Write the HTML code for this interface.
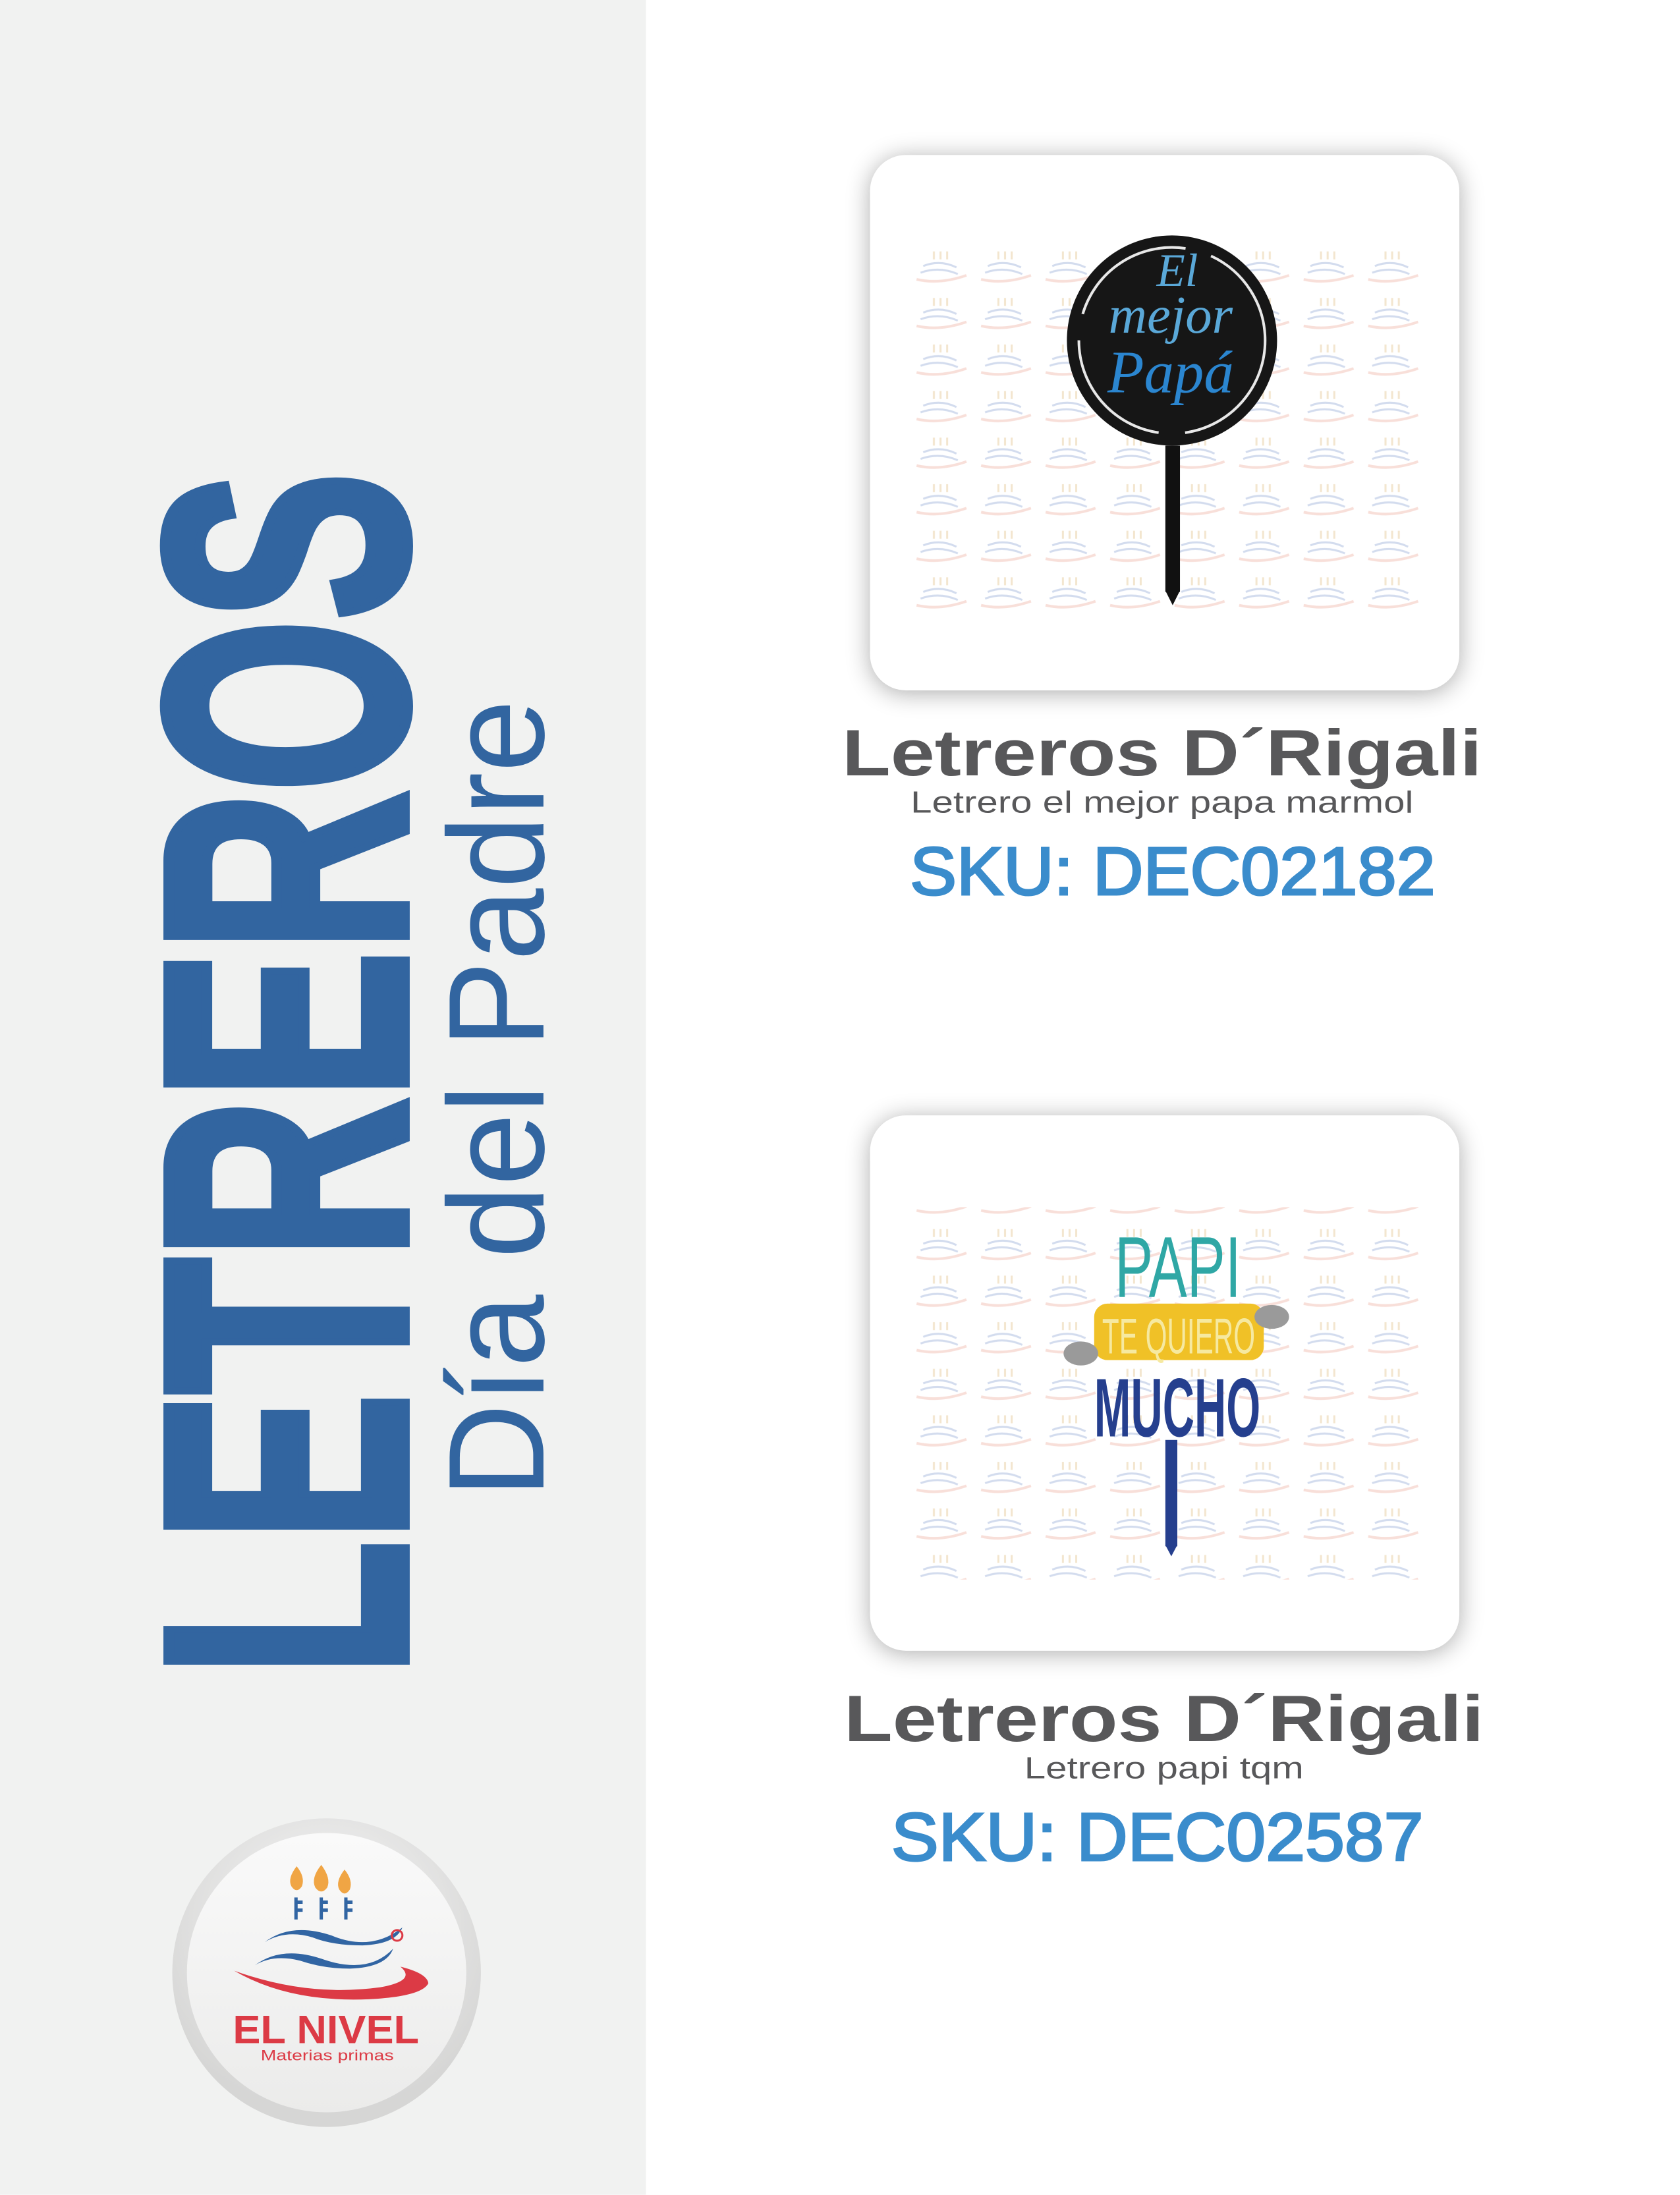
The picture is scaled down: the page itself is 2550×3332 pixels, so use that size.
<!DOCTYPE html>
<html><head><meta charset="utf-8"><style>
html,body{margin:0;padding:0}
body{width:2550px;height:3300px;position:relative;background:#fff;overflow:hidden;font-family:"Liberation Sans",sans-serif}
#w{position:absolute;left:0;top:0;width:2550px;height:3300px;transform:scale(1.0096);transform-origin:0 0}
.left{position:absolute;left:0;top:0;width:971px;height:3300px;background:#f1f2f1}
.card{position:absolute;left:1308px;width:886px;height:805px;border-radius:54px;background:#fff;box-shadow:0 4px 36px rgba(0,0,0,0.32)}
svg{position:absolute;left:0;top:0}
</style></head><body><div id="w">
<div class="left"></div>
<div class="card" style="top:233px"></div>
<div class="card" style="top:1677px"></div>
<svg width="2550" height="3300" viewBox="0 0 2550 3300">
<defs>
<pattern id="wm" x="1370" y="370" width="97" height="70" patternUnits="userSpaceOnUse">
<path d="M18 30 q25 -10 50 2" stroke="#d3dcee" stroke-width="3" fill="none"/>
<path d="M14 40 q28 -10 56 2" stroke="#d3dcee" stroke-width="3" fill="none"/>
<path d="M8 50 q35 8 75 -6" stroke="#f8dfd9" stroke-width="4" fill="none"/>
<path d="M34 8 v12 M44 8 v12 M54 8 v12" stroke="#f3e6cf" stroke-width="3"/>
</pattern>
<radialGradient id="ring" cx="50%" cy="35%" r="60%"><stop offset="0" stop-color="#f8f8f8"/><stop offset="1" stop-color="#d6d6d5"/></radialGradient>
<linearGradient id="inner" x1="0" y1="0" x2="0" y2="1"><stop offset="0" stop-color="#fafafa"/><stop offset="1" stop-color="#ebebea"/></linearGradient>
</defs>
<rect x="1370" y="370" width="770" height="560" fill="url(#wm)"/>
<rect x="1370" y="1815" width="770" height="560" fill="url(#wm)"/>

<!-- sign 1 -->
<rect x="1752" y="670" width="22" height="220" fill="#111"/>
<path d="M1752 888 L1763 910 L1774 888Z" fill="#111"/>
<circle cx="1762" cy="512" r="158" fill="#161616"/>
<circle cx="1762" cy="512" r="140" fill="none" stroke="#e8e8e8" stroke-width="4" stroke-dasharray="200 40"/>
<text x="1760" y="500" font-family="Liberation Serif,serif" font-style="italic" font-size="80" fill="#5aa8d8" text-anchor="middle">mejor</text>
<text x="1770" y="430" font-family="Liberation Serif,serif" font-style="italic" font-size="70" fill="#5aa8d8" text-anchor="middle">El</text>
<text x="1760" y="590" font-family="Liberation Serif,serif" font-style="italic" font-size="90" fill="#2b86d0" text-anchor="middle">Papá</text>

<!-- sign 2 -->
<rect x="1752" y="2165" width="18" height="160" fill="#253f8e"/>
<path d="M1752 2323 L1761 2340 L1770 2323Z" fill="#253f8e"/>
<text x="1771" y="1950" font-family="Liberation Sans Narrow,Liberation Sans,sans-serif" font-size="130" fill="#2fa7a5" text-anchor="middle" textLength="190" lengthAdjust="spacingAndGlyphs">PAPI</text>
<rect x="1645" y="1960" width="255" height="85" rx="20" fill="#f0c127"/>
<ellipse cx="1625" cy="2035" rx="26" ry="18" fill="#9a9a9a"/>
<ellipse cx="1912" cy="1980" rx="26" ry="18" fill="#9a9a9a"/>
<text x="1772" y="2035" font-family="Liberation Sans Narrow,Liberation Sans,sans-serif" font-size="75" fill="#f6e9a0" text-anchor="middle" textLength="230" lengthAdjust="spacingAndGlyphs">TE QUIERO</text>
<text x="1770" y="2160" font-family="Liberation Sans Narrow,Liberation Sans,sans-serif" font-weight="bold" font-size="125" fill="#253f8e" text-anchor="middle" textLength="250" lengthAdjust="spacingAndGlyphs">MUCHO</text>

<!-- titles -->
<text x="1747" y="1166" font-weight="bold" font-size="98" fill="#58585a" text-anchor="middle" textLength="962" lengthAdjust="spacingAndGlyphs">Letreros D´Rigali</text>
<text x="1747" y="1222" font-size="46" fill="#58585a" text-anchor="middle" textLength="756" lengthAdjust="spacingAndGlyphs">Letrero el mejor papa marmol</text>
<text x="1763" y="1345" font-size="102" fill="#3a8ccc" stroke="#3a8ccc" stroke-width="3" text-anchor="middle" textLength="790" lengthAdjust="spacingAndGlyphs">SKU: DEC02182</text>

<text x="1750" y="2618" font-weight="bold" font-size="98" fill="#58585a" text-anchor="middle" textLength="962" lengthAdjust="spacingAndGlyphs">Letreros D´Rigali</text>
<text x="1750" y="2674" font-size="46" fill="#58585a" text-anchor="middle" textLength="420" lengthAdjust="spacingAndGlyphs">Letrero papi tqm</text>
<text x="1740" y="2797" font-size="102" fill="#3a8ccc" stroke="#3a8ccc" stroke-width="3" text-anchor="middle" textLength="800" lengthAdjust="spacingAndGlyphs">SKU: DEC02587</text>

<!-- vertical titles -->
<text transform="translate(608,2520) rotate(-90)" font-weight="bold" font-size="515" fill="#3265a0" stroke="#3265a0" stroke-width="16" stroke-linejoin="miter" textLength="1810" lengthAdjust="spacingAndGlyphs">LETREROS</text>
<text transform="translate(817,2252) rotate(-90)" font-size="205" fill="#3265a0" textLength="1200" lengthAdjust="spacingAndGlyphs">Día del Padre</text>

<!-- logo -->
<circle cx="491" cy="2966" r="232" fill="url(#ring)"/>
<circle cx="491" cy="2966" r="210" fill="url(#inner)"/>
<g fill="#f0a544">
<path d="M446 2806 q-14 18 -8 30 q8 12 16 0 q5 -14 -8 -30Z"/>
<path d="M483 2804 q-16 20 -9 34 q9 12 18 0 q6 -14 -9 -34Z"/>
<path d="M518 2811 q-14 18 -8 30 q8 12 16 0 q5 -14 -8 -30Z"/>
</g>
<g stroke="#3165a3" stroke-width="5" fill="none">
<path d="M445 2853 v33 M483 2853 v33 M520 2853 v33"/>
<path d="M445 2860 h10 M445 2872 h10 M483 2860 h10 M483 2872 h10 M520 2860 h10 M520 2872 h10"/>
</g>
<path d="M398 2920 q40 -30 100 -10 q60 25 107 -12 q-10 25 -60 27 q-45 0 -75 -12 q-40 -12 -72 7Z" fill="#3165a3"/>
<path d="M383 2955 q40 -30 100 -10 q70 25 108 -15 q-10 28 -65 30 q-40 0 -75 -12 q-40 -10 -68 7Z" fill="#3165a3"/>
<path d="M352 2963 q110 40 220 25 q55 -10 30 -31 q40 10 42 25 q-10 20 -90 24 q-120 5 -202 -43Z" fill="#dc3a45"/>
<circle cx="597" cy="2910" r="8" fill="none" stroke="#dc3a45" stroke-width="3"/>
<text x="490" y="3072" font-weight="bold" font-size="60" fill="#dc3a45" text-anchor="middle" textLength="280" lengthAdjust="spacingAndGlyphs">EL NIVEL</text>
<text x="492" y="3098" font-size="22" fill="#dc3a45" text-anchor="middle" textLength="200" lengthAdjust="spacingAndGlyphs">Materias primas</text>
</svg>
</div></body></html>
